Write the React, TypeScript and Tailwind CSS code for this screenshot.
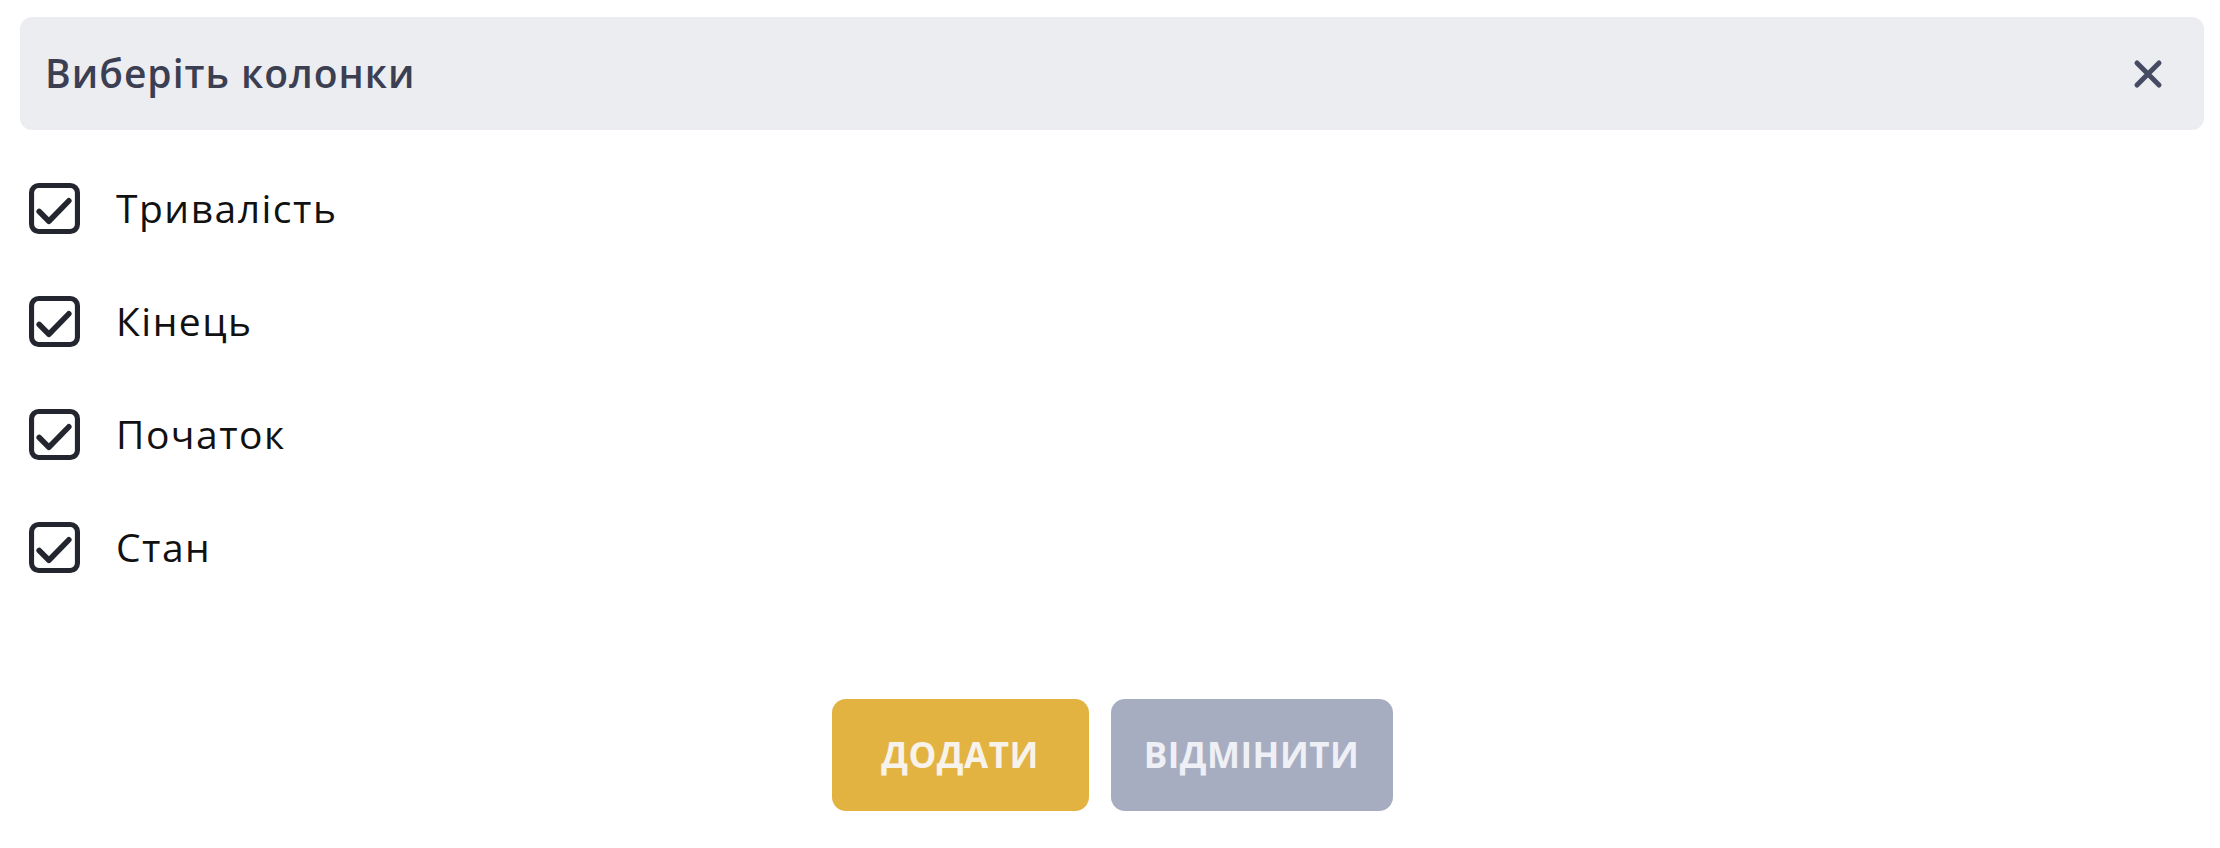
import { useState } from "react";

const columns = ["Тривалість", "Кінець", "Початок", "Стан"];

function CheckBox({ checked }: { checked: boolean }) {
  return (
    <svg width="51" height="51" viewBox="0 0 50 50" className="shrink-0">
      <rect x="2.5" y="2.5" width="45" height="45" rx="7" fill="none" stroke="#23252f" strokeWidth="5" />
      {checked && (
        <polyline
          points="10,28 19.5,37.5 39,17.5"
          fill="none"
          stroke="#23252f"
          strokeWidth="5.5"
          strokeLinecap="round"
          strokeLinejoin="round"
        />
      )}
    </svg>
  );
}

export default function App() {
  const [selected, setSelected] = useState<string[]>(columns);

  const toggle = (name: string) => {
    setSelected((prev) => (prev.includes(name) ? prev.filter((n) => n !== name) : [...prev, name]));
  };

  return (
    <div className="w-[2220px] h-[848px] bg-white pt-[17px] pl-[20px] pr-[16px] font-['Open_Sans',sans-serif]">
      <div className="h-[113px] bg-[#ecedf1] rounded-[12px] flex items-center justify-between pl-[25px] pr-[41px]">
        <h2 className="text-[39px] font-semibold text-[#3b3f51] tracking-[1px]">Виберіть колонки</h2>
        <button className="text-[#454b63]">
          <svg width="30" height="30" viewBox="0 0 30 30">
            <path d="M4 4 L26 26 M26 4 L4 26" stroke="currentColor" strokeWidth="5" strokeLinecap="round" />
          </svg>
        </button>
      </div>

      <div className="mt-[22px] flex flex-col">
        {columns.map((name) => (
          <label
            key={name}
            onClick={() => toggle(name)}
            className="h-[113px] flex items-center gap-[36px] pl-[9px] cursor-pointer"
          >
            <CheckBox checked={selected.includes(name)} />
            <span className="text-[39px] text-[#111] tracking-[1.5px]">{name}</span>
          </label>
        ))}
      </div>

      <div className="mt-[95px] flex justify-center gap-[22px]">
        <button className="w-[257px] h-[112px] rounded-[14px] bg-[#e3b342] text-[#f8f3ea] text-[35px] font-bold tracking-[0.5px]">
          ДОДАТИ
        </button>
        <button className="w-[282px] h-[112px] rounded-[14px] bg-[#a7adc1] text-[#eef0f5] text-[35px] font-bold tracking-[0.5px]">
          ВІДМІНИТИ
        </button>
      </div>
    </div>
  );
}
